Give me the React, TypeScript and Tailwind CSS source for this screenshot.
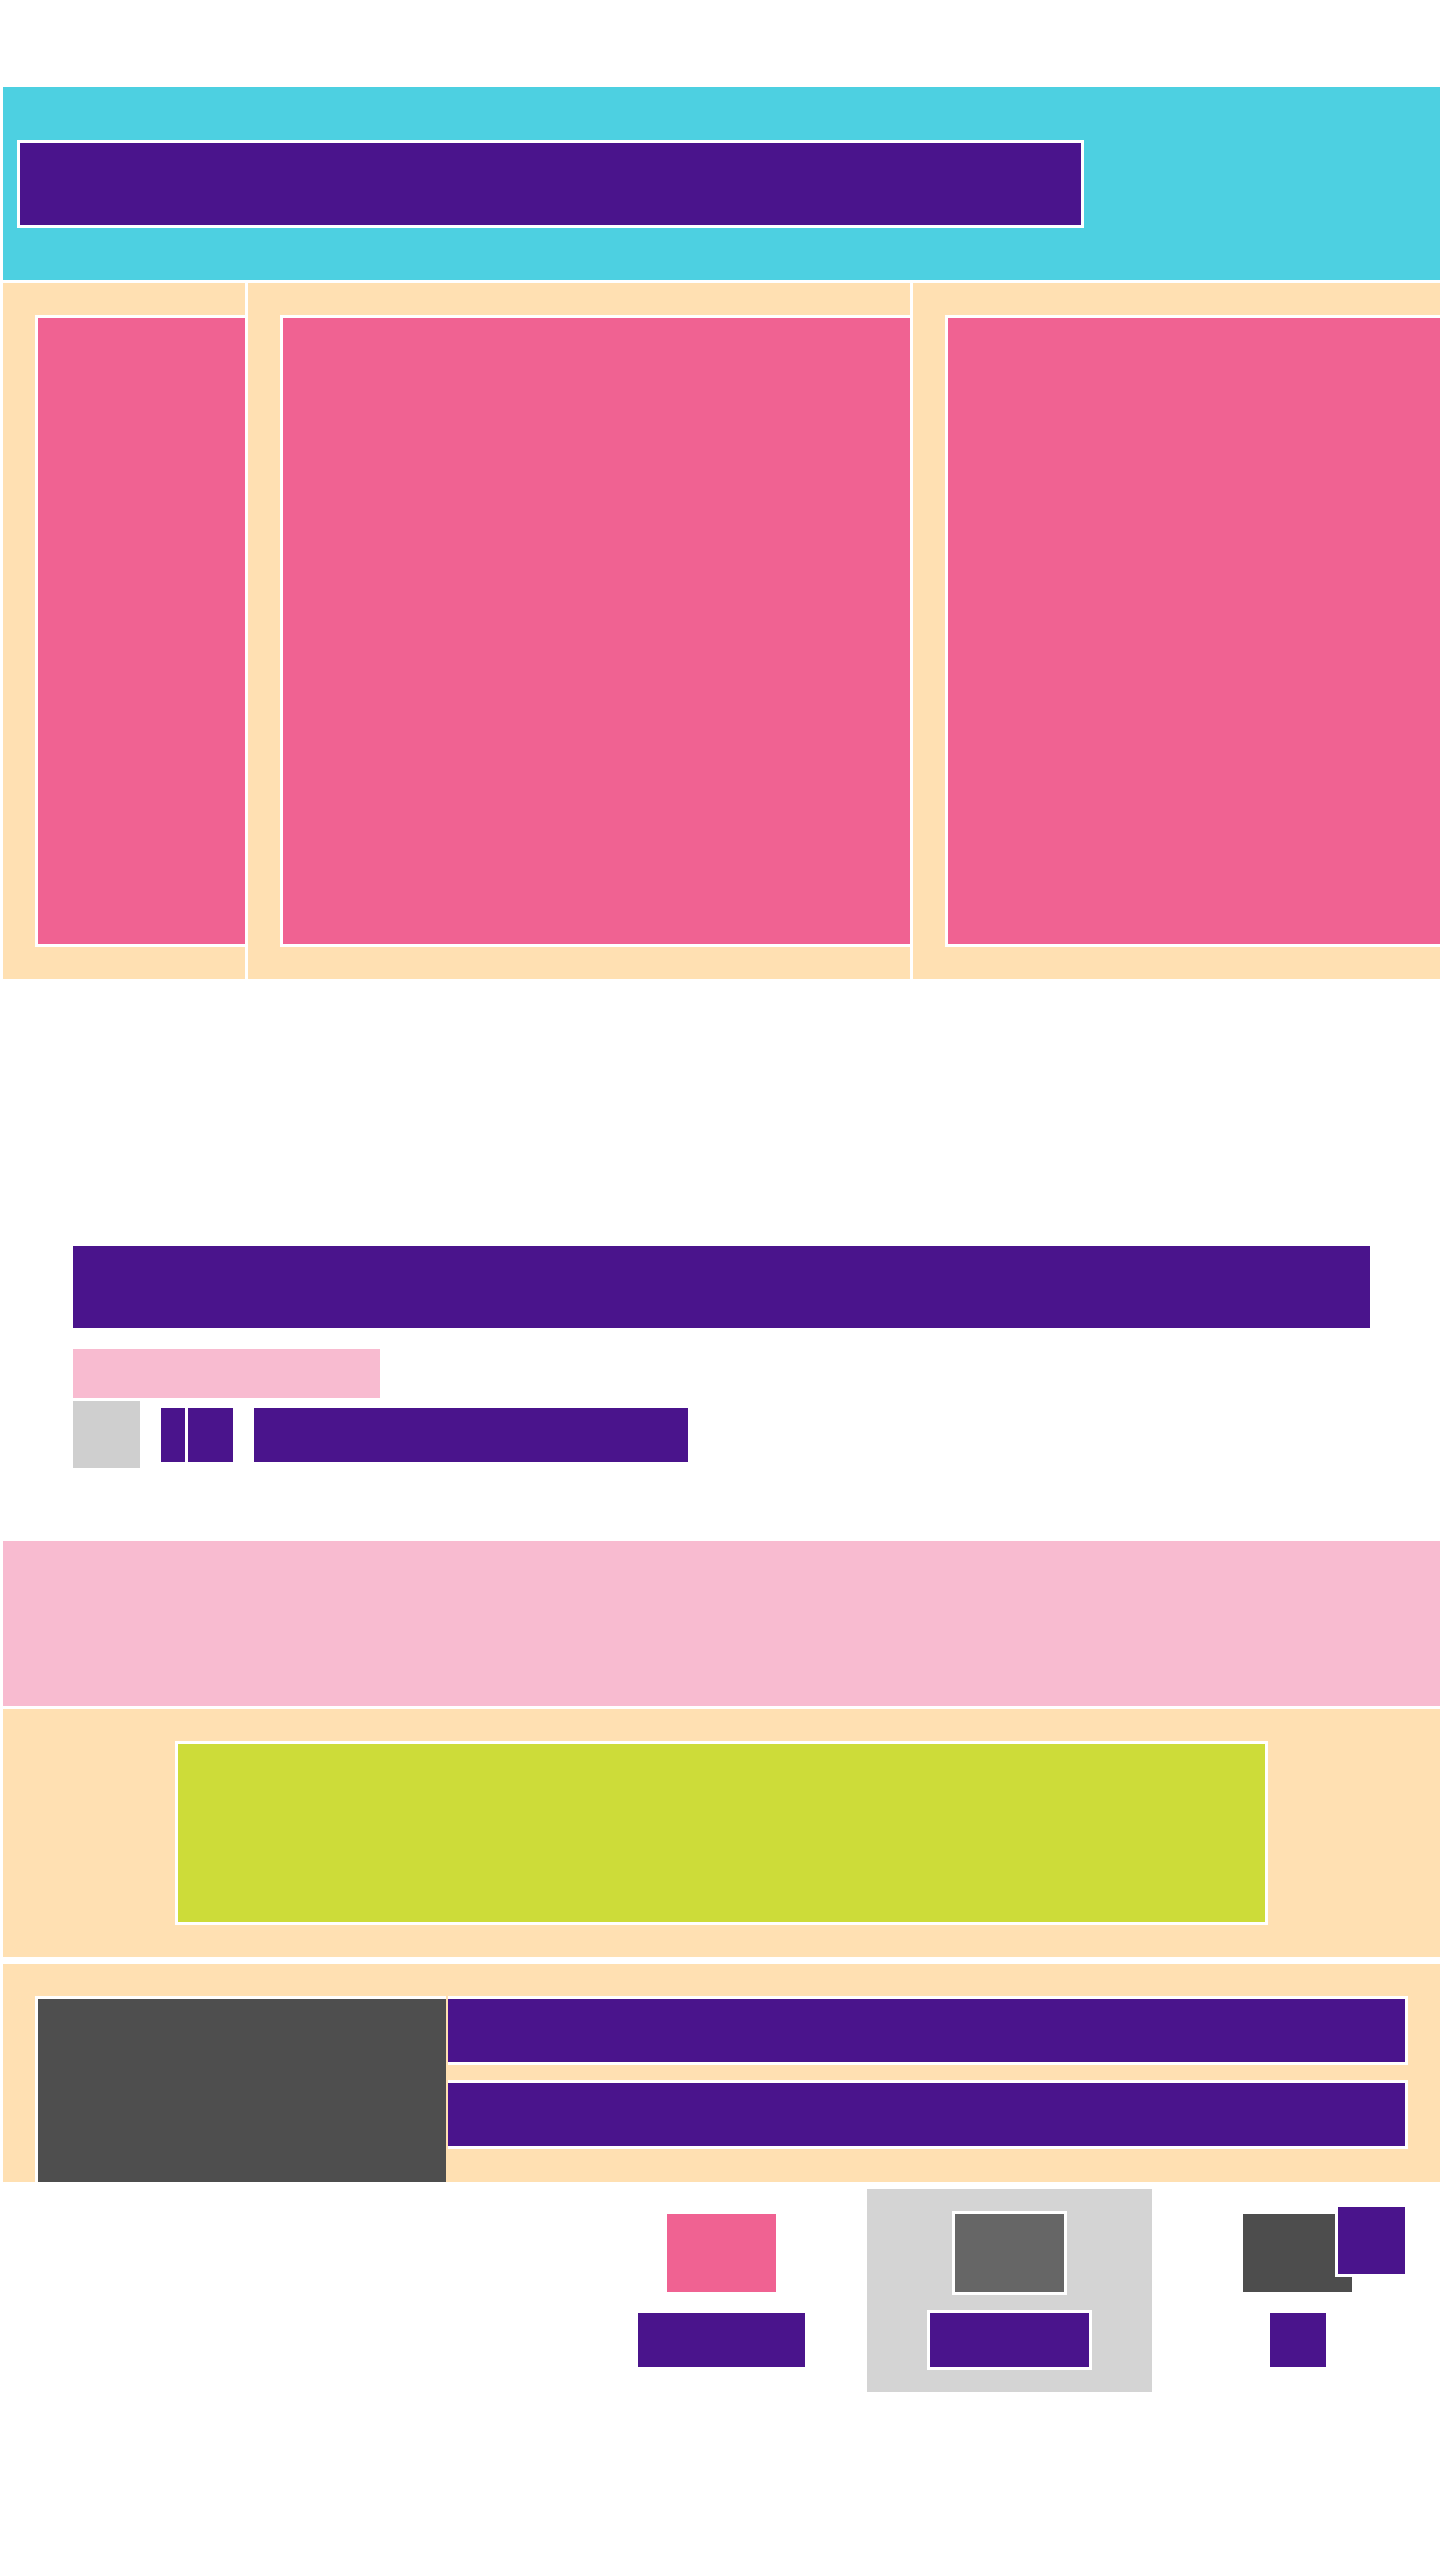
export default function App() {
  return (
    <div className="min-h-[2560px] w-[1440px] overflow-hidden bg-white pl-[3px] pt-[87px]">
      {/* header band */}
      <div className="flex h-[193px] items-center bg-[#4dd0e1] pl-[14px]">
        <div className="h-[88px] w-[1067px] border-[3px] border-white bg-[#4a148c]" />
      </div>

      {/* three columns */}
      <div className="mt-[3px] flex h-[696px] gap-[3px]">
        <div className="w-[242px] overflow-hidden bg-[#ffe0b2] py-8 pl-8">
          <div className="h-full border-[3px] border-r-0 border-white bg-[#f06292]" />
        </div>
        <div className="w-[662px] overflow-hidden bg-[#ffe0b2] py-8 pl-8">
          <div className="h-full border-[3px] border-r-0 border-white bg-[#f06292]" />
        </div>
        <div className="flex-1 overflow-hidden bg-[#ffe0b2] py-8 pl-8">
          <div className="h-full border-[3px] border-r-0 border-white bg-[#f06292]" />
        </div>
      </div>

      {/* title block */}
      <div className="mt-[267px] px-[70px]">
        <div className="h-[82px] w-full bg-[#4a148c]" />
        <div className="mt-[21px] h-[49px] w-[307px] bg-[#f8bbd0]" />
        <div className="mt-[3px] flex items-center gap-[21px]">
          <div className="h-[67px] w-[67px] bg-[#cfcfcf]" />
          <div className="flex gap-[3px]">
            <div className="h-[54px] w-[24px] bg-[#4a148c]" />
            <div className="h-[54px] w-[45px] bg-[#4a148c]" />
          </div>
          <div className="h-[54px] w-[434px] bg-[#4a148c]" />
        </div>
      </div>

      {/* pink band */}
      <div className="mt-[73px] h-[165px] bg-[#f8bbd0]" />

      {/* lime panel */}
      <div className="mt-[3px] bg-[#ffe0b2] py-8">
        <div className="mx-auto h-[184px] w-[1093px] border-[3px] border-white bg-[#cddc39]" />
      </div>

      {/* media row */}
      <div className="mt-[7px] h-[218px] overflow-hidden bg-[#ffe0b2] px-8 pt-8">
        <div className="flex">
          <div className="h-[300px] w-[411px] border-l-[3px] border-t-[3px] border-white bg-[#4e4e4e]" />
          <div className="flex flex-1 flex-col gap-[15px] pl-[2px]">
            <div className="h-[69px] border-[3px] border-l-0 border-white bg-[#4a148c]" />
            <div className="h-[69px] border-[3px] border-l-0 border-white bg-[#4a148c]" />
          </div>
        </div>
      </div>

      {/* bottom nav */}
      <div className="mt-[7px] flex justify-end gap-[3px]">
        <div className="flex w-[285px] flex-col items-center gap-[21px] py-[25px]">
          <div className="h-[78px] w-[109px] bg-[#f06292]" />
          <div className="h-[54px] w-[167px] bg-[#4a148c]" />
        </div>
        <div className="flex w-[285px] flex-col items-center gap-[21px] bg-[#d4d4d4] py-[25px]">
          <div className="h-[78px] w-[109px] bg-[#666666] ring-[3px] ring-white" />
          <div className="h-[54px] w-[159px] bg-[#4a148c] ring-[3px] ring-white" />
        </div>
        <div className="flex w-[285px] flex-col items-center gap-[21px] py-[25px]">
          <div className="relative h-[78px] w-[109px] bg-[#4d4d4d]">
            <div className="absolute -top-[7px] left-[95px] h-[67px] w-[67px] bg-[#4a148c] ring-[3px] ring-white" />
          </div>
          <div className="h-[54px] w-[56px] bg-[#4a148c]" />
        </div>
      </div>
    </div>
  );
}
